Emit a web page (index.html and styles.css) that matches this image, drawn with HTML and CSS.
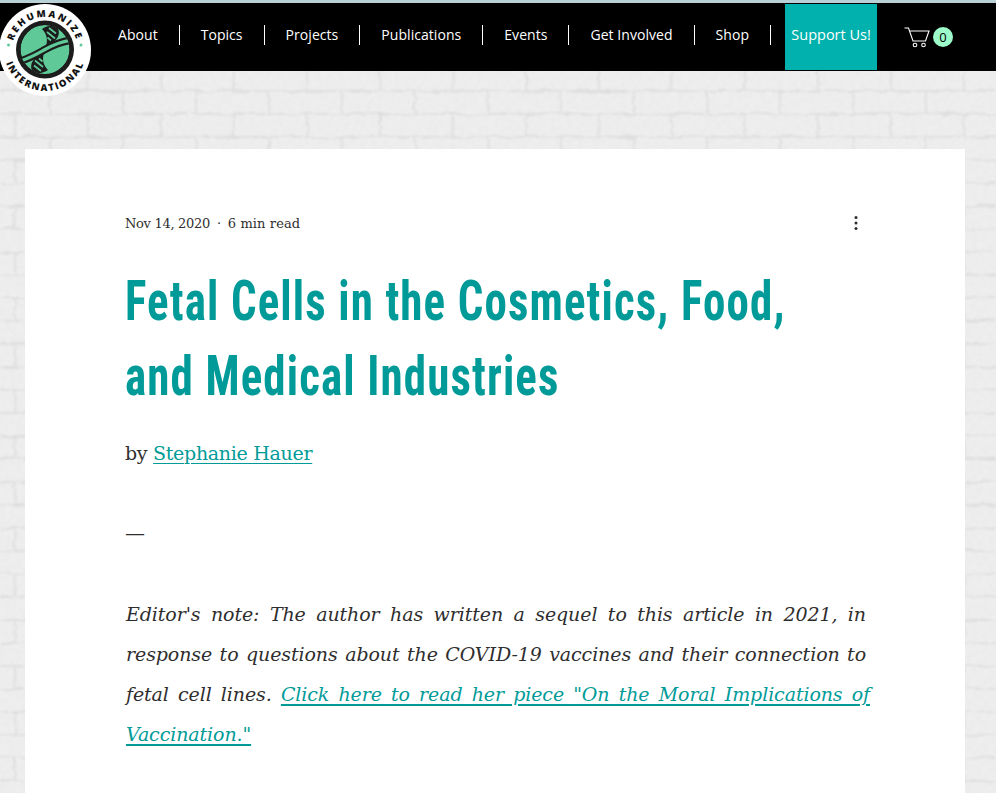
FILE: index.html
```html
<!DOCTYPE html>
<html lang="en">
<head>
<meta charset="utf-8">
<title>Fetal Cells in the Cosmetics, Food, and Medical Industries</title>
<link rel="stylesheet" href="styles.css">
</head>
<body>
<header class="site-header">
  <svg class="logo" viewBox="0 0 92 92" width="92" height="92" aria-label="Rehumanize International">
    <defs>
      <path id="arc-top" d="M13 46 A33 33 0 0 1 79 46"/>
      <path id="arc-bottom" d="M5 46 A41 41 0 0 0 87 46"/>
      <clipPath id="inner"><circle cx="46" cy="45.500" r="24.500"/></clipPath>
      <g id="lobe">
        <path d="M43 25 C49 21 55 21 59 24 C62 32 57 38 47 42 C49 36 48 30 43 25 Z" fill="#1c1c1c"/>
        <path d="M50 24 L57 29.500 M48 28 L56 34.500 M48.500 33.500 L52 36.500" fill="none" stroke="#5fc997" stroke-width="1.700"/>
      </g>
    </defs>
    <circle cx="46" cy="46" r="46" fill="#fff"/>
    <circle cx="46" cy="45.500" r="29" fill="#1c1c1c"/>
    <g clip-path="url(#inner)">
      <circle cx="46" cy="45.500" r="24.500" fill="#5fc997"/>
      <path d="M18 58 C30 55 38 50 46 45.500 C54 41 62 37 74 36" fill="none" stroke="#1c1c1c" stroke-width="7.500"/>
      <use href="#lobe"/>
      <use href="#lobe" transform="rotate(180 46 45.500)"/>
      <path d="M18 58 C30 55 38 50 46 45.500 C54 41 62 37 74 36" fill="none" stroke="#5fc997" stroke-width="3.200"/>
    </g>
    <circle cx="9.500" cy="41" r="1.500" fill="#5fc997"/>
    <circle cx="82" cy="41" r="1.500" fill="#5fc997"/>
    <text class="logo-text logo-top"><textPath href="#arc-top" startOffset="50%" text-anchor="middle">REHUMANIZE</textPath></text>
    <text class="logo-text logo-bottom"><textPath href="#arc-bottom" startOffset="50%" text-anchor="middle">INTERNATIONAL</textPath></text>
  </svg>
  <nav class="nav">
    <a class="nav-item" href="#">About</a>
    <a class="nav-item" href="#">Topics</a>
    <a class="nav-item" href="#">Projects</a>
    <a class="nav-item" href="#">Publications</a>
    <a class="nav-item" href="#">Events</a>
    <a class="nav-item" href="#">Get Involved</a>
    <a class="nav-item" href="#">Shop</a>
    <a class="support" href="#">Support Us!</a>
  </nav>
  <div class="cart">
    <svg class="cart-icon" viewBox="0 0 26 21" width="26" height="21">
      <path d="M0.500 1 H4.500 L9 14 H21.500 L25 4 H5.500" fill="none" stroke="#fff" stroke-width="1.100"/>
      <circle cx="11" cy="18" r="1.800" fill="none" stroke="#fff" stroke-width="1.100"/>
      <circle cx="19.500" cy="18" r="1.800" fill="none" stroke="#fff" stroke-width="1.100"/>
    </svg>
    <span class="cart-count">0</span>
  </div>
</header>
<main class="wall">
  <svg class="wall-texture" width="996" height="722" aria-hidden="true">
    <defs>
      <pattern id="bricks" width="73" height="46" patternUnits="userSpaceOnUse">
        <path d="M0 20 H73 M0 43 H73 M15 0 V20 M50 20 V43 M15 43 V46" fill="none" stroke="#e0e0e0" stroke-width="2"/>
      </pattern>
      <filter id="rough" x="0" y="0" width="100%" height="100%">
        <feTurbulence type="fractalNoise" baseFrequency="0.05 0.2" numOctaves="3" seed="4" result="n"/>
        <feDisplacementMap in="SourceGraphic" in2="n" scale="6"/>
        <feGaussianBlur stdDeviation="1"/>
      </filter>
      <filter id="grain" x="0" y="0" width="100%" height="100%">
        <feTurbulence type="fractalNoise" baseFrequency="0.18" numOctaves="3" seed="9"/>
        <feColorMatrix values="0 0 0 0 0.6  0 0 0 0 0.6  0 0 0 0 0.6  0.6 0 0 0 -0.2"/>
      </filter>
    </defs>
    <rect width="996" height="722" fill="url(#bricks)" filter="url(#rough)"/>
    <rect width="996" height="722" filter="url(#grain)" opacity="0.3"/>
  </svg>
  <article class="card">
    <div class="meta">
      <span>Nov 14, 2020</span><span class="dot">·</span><span class="read">6 min read</span>
      <svg class="more" viewBox="0 0 4 16" width="4" height="16">
        <circle cx="2" cy="2.500" r="1.500"/><circle cx="2" cy="8" r="1.500"/><circle cx="2" cy="13.500" r="1.500"/>
      </svg>
    </div>
    <h1 class="title">Fetal Cells in the Cosmetics, Food,<br>and Medical Industries</h1>
    <p class="byline">by <a href="#">Stephanie Hauer</a></p>
    <p class="dash">—</p>
    <div class="note">
      <span class="line">Editor's note: The author has written a sequel to this article in 2021, in</span>
      <span class="line">response to questions about the COVID-19 vaccines and their connection to</span>
      <span class="line line-wide">fetal cell lines. <a href="#">Click here to read her piece "On the Moral Implications of</a></span>
      <span class="line line-last"><a href="#">Vaccination."</a></span>
    </div>
  </article>
</main>
</body>
</html>
```
FILE: styles.css
```css
* { box-sizing: border-box; }
html, body { margin: 0; height: 793px; overflow: hidden; }
body { background: #b9d0d6; padding-top: 3px; font-family: "DejaVu Serif", serif; color: #2f2e2e; }

.site-header {
  position: relative;
  z-index: 2;
  height: 68px;
  background: #000;
  display: flex;
  padding-left: 97px;
  font-family: "Open Sans", sans-serif;
}
.logo { position: absolute; left: -1px; top: 1px; z-index: 2; }
.logo-text { font: 800 9.500px "Open Sans", sans-serif; fill: #111; }
.logo-top { letter-spacing: 2.100px; }
.logo-bottom { letter-spacing: 1.700px; }

.nav { display: flex; align-items: center; }
.nav-item {
  color: #fff;
  text-decoration: none;
  font-size: 14px;
  letter-spacing: 0.050px;
  line-height: 20px;
  padding: 0 21px;
  border-right: 1px solid #fff;
  margin-top: -4px;
}
.support {
  display: flex;
  align-items: center;
  justify-content: center;
  align-self: flex-start;
  width: 92px;
  height: 66px;
  margin: 1px 0 0 14px;
  background: #00b1ad;
  color: #fff;
  text-decoration: none;
  font-size: 14.500px;
  padding-bottom: 6px;
}
.cart { display: flex; align-items: center; margin-left: 27px; gap: 3px; }
.cart-icon { display: block; }
.cart-count {
  width: 20px; height: 20px; border-radius: 50%;
  background: #9cfbc9; color: #000;
  font-size: 13px; line-height: 20px; text-align: center;
}

.wall {
  position: relative;
  height: 722px;
  padding: 78px 31px 0 25px;
  background-color: #eeeeee;
}
.wall-texture { position: absolute; left: 0; top: 0; display: block; }
.card { position: relative; background: #fff; height: 644px; padding: 64px 96px 0 100px; }

.meta {
  display: flex;
  align-items: center;
  font-size: 13px;
  height: 20px;
  letter-spacing: -0.300px;
}
.read { letter-spacing: 0.100px; }
.dot { margin: 0 7px; }
.more { margin-left: auto; fill: #2f2e2e; margin-right: 11px; }

.title {
  margin: 31px 0 0;
  font: 700 56px/75px "Liberation Sans Narrow", "Roboto Condensed", sans-serif;
  color: #009b98;
  letter-spacing: 1.400px;
  white-space: nowrap;
  transform: scaleX(0.803);
  transform-origin: left center;
}
.byline { margin: 24px 0 0; font-size: 19px; line-height: 30px; letter-spacing: -0.300px; }
.byline a, .note a { color: #009b98; text-decoration-thickness: 2px; text-underline-offset: 3px; }
.byline a { text-decoration-thickness: 1px; }
.dash { margin: 50px 0 0; font-size: 20px; line-height: 30px; }
.note { margin: 46px 0 0 1px; font-size: 19px; line-height: 40px; font-style: italic; letter-spacing: -0.100px; }
.line { display: block; width: 740px; text-align: justify; text-align-last: justify; white-space: normal; }
.line-wide { width: 744px; }
.line-last { text-align-last: left; }
```
